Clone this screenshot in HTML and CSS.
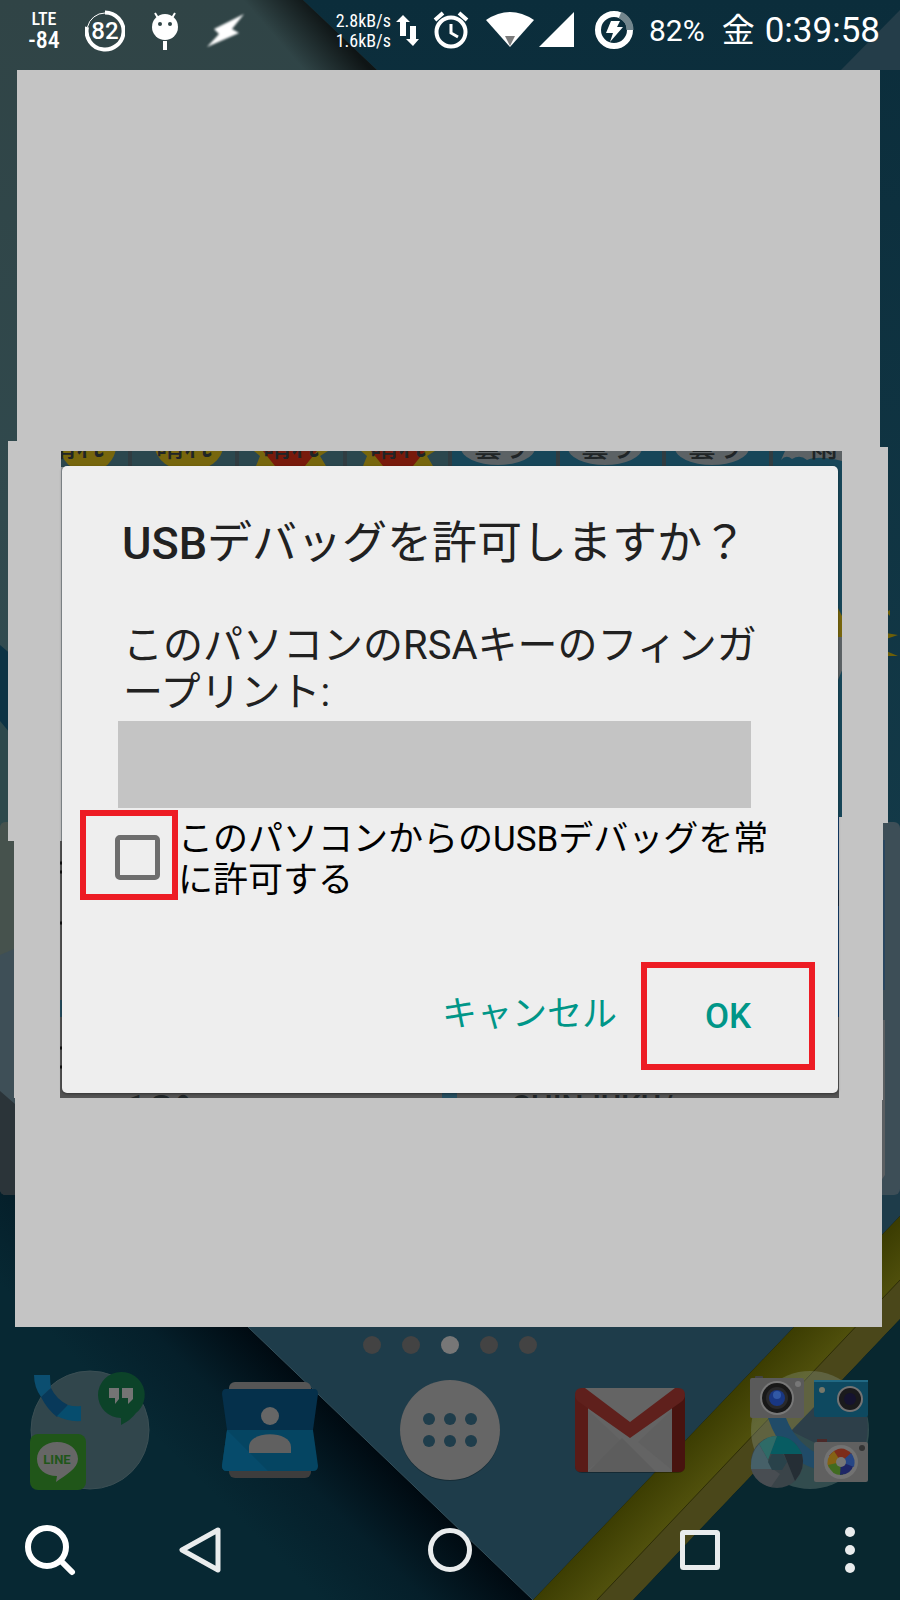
FILE: index.html
```html
<!DOCTYPE html>
<html lang="ja">

<head>
  <meta charset="utf-8">
  <meta name="viewport" content="width=device-width, initial-scale=1">
  <title>USBデバッグ</title>
  <link rel="stylesheet" href="styles.css">
</head>

<body>
  <div class="screen">
    <!-- 壁紙 -->
    <svg class="wallpaper" viewBox="0 0 900 1600" preserveAspectRatio="xMidYMid slice" aria-hidden="true">
      <defs>
        <linearGradient id="leftTop" x1="0" y1="0" x2="0" y2="1">
          <stop offset="0" stop-color="#304446" />
          <stop offset="1" stop-color="#304b50" />
        </linearGradient>
        <linearGradient id="edgeTop" gradientUnits="userSpaceOnUse" x1="302" y1="68" x2="340" y2="35">
          <stop offset="0" stop-color="#000" stop-opacity="0" />
          <stop offset="1" stop-color="#000" stop-opacity=".7" />
        </linearGradient>
        <linearGradient id="right" x1="0" y1="0" x2="0" y2="1">
          <stop offset="0" stop-color="#0b2d3b" />
          <stop offset="1" stop-color="#1a4453" />
        </linearGradient>
        <linearGradient id="edgeBottom" gradientUnits="userSpaceOnUse" x1="270" y1="1550" x2="372" y2="1446">
          <stop offset="0" stop-color="#072833" />
          <stop offset=".5" stop-color="#051f2a" />
          <stop offset="1" stop-color="#000a11" />
        </linearGradient>
        <linearGradient id="yellow" gradientUnits="userSpaceOnUse" x1="660" y1="1467" x2="692" y2="1498">
          <stop offset="0" stop-color="#3c3d02" />
          <stop offset="1" stop-color="#50500c" />
        </linearGradient>
        <clipPath id="hole">
          <path d="M61 451H842V817H839V1098H60V841H61Z" />
        </clipPath>
      </defs>
      <rect width="900" height="1600" fill="url(#right)" />
      <path d="M0 0H303L377 70V720H0Z" fill="url(#leftTop)" />
      <path d="M230 0H303L377 70H230Z" fill="url(#edgeTop)" />
      <path d="M900 10V70H841Z" fill="#243d49" />
      <path d="M0 645L20 662V745L0 721Z" fill="#0c3344" />
      <path d="M0 721L20 745V830H0Z" fill="#2d494c" />
      <path d="M0 1190H900V1600H0Z" fill="url(#edgeBottom)" />
      <path d="M105 1185L248 1327L533 1600L900 1216V1190Z" fill="#1e3c4a" />
      <path d="M248 1327L533 1600" stroke="#34505b" />
      <path d="M533 1600L900 1216V1319L633 1600Z" fill="url(#yellow)" />
      <path d="M597 1600L900 1280V1319L633 1600Z" fill="#4a471a" />
      <path d="M597 1600L900 1280" stroke="#2e2d08" />
      <path d="M633 1600L900 1319V1600Z" fill="#08272f" />
      <rect x="0" y="822" width="30" height="373" rx="6" fill="#3e4f57" />
      <path d="M0 828Q0 822 6 822H30V942L0 955Z" fill="#46524d" />
      <path d="M0 1091L30 1117V1195H6Q0 1195 0 1189Z" fill="#2b3439" />
      <rect x="870" y="822" width="30" height="373" rx="6" fill="#3d4e57" />
      <path d="M880 1020H885V1175L880 1182Z" fill="#5b5f62" />
      <path d="M884 840V990" stroke="#163e69" />
      <path d="M886 612L890 616V610ZM886 633L898 635L886 639ZM886 651L898 656L886 656Z" fill="#6d5f08" />
      <!-- 目隠し -->
      <path d="M17 70H880V447H888V823H883V1100H882V1327H15V1098H14V841H8V441H17Z" fill="#c4c4c4" />
      <g clip-path="url(#hole)">
        <rect x="60" y="451" width="782" height="647" fill="#545454" />
        <rect x="60" y="451" width="8" height="390" fill="#8e9599" />
        <rect x="60" y="451" width="390" height="16" fill="#2b474e" />
        <rect x="450" y="451" width="392" height="366" fill="#174659" />
        <rect x="836" y="817" width="4" height="200" fill="#123c6c" />
        <path d="M60 1000H64V1017H60ZM442 1090H457V1098H442Z" fill="#264e60" />
        <g fill="#77660d">
          <ellipse cx="88" cy="446" rx="28" ry="26" />
          <ellipse cx="189" cy="446" rx="34" ry="25" />
          <path d="M254 451L260 456L256 466H326L320 456L328 451ZM361 451L367 456L363 466H433L427 456L435 451Z" />
          <path d="M836 604L843 618V637H836Z" />
        </g>
        <path d="M263 451H317L305 466H275ZM371 451H425L413 466H383Z" fill="#781a0b" />
        <g fill="#5c6265">
          <ellipse cx="498" cy="448" rx="37" ry="17" />
          <ellipse cx="605" cy="448" rx="37" ry="17" />
          <ellipse cx="712" cy="448" rx="37" ry="17" />
          <path d="M781 460Q786 454 792 459Q800 454 807 460Q818 455 842 461V451H785Z" />
          <path d="M836 637H843V668L838 680Z" />
        </g>
        <path d="M130 451V466M237 451V466M345 451V466M450 451V466M558 451V466M664 451V466M771 451V466" stroke="#303c41"
          stroke-width="4" />
        <g class="weather">
          <text x="48" y="457">晴れ</text>
          <text x="156" y="457">晴れ</text>
          <text x="263" y="457">晴れ</text>
          <text x="370" y="457">晴れ</text>
          <text x="474" y="457">曇り</text>
          <text x="581" y="457">曇り</text>
          <text x="688" y="457">曇り</text>
          <text x="810" y="457">雨</text>
          <text class="city" x="512" y="1117">SHINJUKU/</text>
          <text class="degree" x="122" y="1128">18°</text>
        </g>
        <path d="M60 863H63M60 872H63M60 923H63M60 1048H63M60 1067H63M837 890V906" stroke="#111" stroke-width="3" />
      </g>
    </svg>

    <header class="status">
      <div class="group left">
        <div class="signal">
          <span class="lte">LTE</span>
          <span class="dbm">-84</span>
        </div>
        <div class="ring">
          <svg width="40" height="42" viewBox="0 0 40 42" fill="none" stroke="#fff">
            <path d="M20 2.500A18.500 18.500 0 1 1 2 17" stroke-width="4" />
            <path d="M2.500 17A18 18 0 0 1 20 3" stroke-width="1" />
          </svg>
          <span>82</span>
        </div>
        <svg width="32" height="42" viewBox="0 0 32 42" fill="#fff">
          <circle cx="16" cy="17" r="13" />
          <path d="M9 8L6 3M23 8L26 3" stroke="#fff" stroke-width="2" />
          <rect x="14" y="31" width="4" height="9" />
          <circle cx="11" cy="14" r="2" fill="#304446" />
          <circle cx="21" cy="14" r="2" fill="#304446" />
        </svg>
        <svg class="bolt" width="44" height="42" viewBox="0 0 44 42" fill="#fff">
          <path d="M39 4L9 19L14 24L2 37L34 23L27 19Z" />
        </svg>
      </div>

      <div class="group right">
        <div class="speed">
          <span>2.8kB/s</span>
          <span>1.6kB/s</span>
        </div>
        <svg class="near" width="26" height="42" viewBox="0 0 26 42" fill="#fff">
          <path d="M8 5L15 12H11V26H5V12H1ZM18 36L11 29H15V16H21V29H24Z" />
        </svg>
        <svg width="36" height="42" viewBox="0 0 36 42" fill="none" stroke="#fff">
          <circle cx="18" cy="22" r="14.500" stroke-width="4" />
          <path d="M18 14V23L25 27" stroke-width="3" />
          <path d="M2 10L10 3M34 10L26 3" stroke-width="4" />
        </svg>
        <svg width="96" height="42" viewBox="0 0 96 42" fill="#fff">
          <path d="M5 10Q29 -6 53 10L29 37Z" />
          <path d="M24 26H34L29 36Z" fill="#7c7c7c" />
          <path d="M58 37H93V2Z" />
        </svg>
        <svg width="48" height="42" viewBox="0 0 48 42">
          <circle cx="25" cy="20" r="16" fill="none" stroke="#fff" stroke-width="6" />
          <path d="M31 5A16 16 0 0 1 41 20" fill="none" stroke="#73868d" stroke-width="7" />
          <path d="M22 11H31L28 17H34L21 32L24 23H17Z" fill="#fff" />
        </svg>
        <span class="percent">82%</span>
        <span class="clock"><span>金</span><time>0:39:58</time></span>
      </div>
    </header>

    <main>
      <form class="dialog" role="dialog" aria-labelledby="title">
        <h1 id="title"><b>USB</b>デバッグを許可しますか？</h1>
        <p>このパソコンのRSAキーのフィンガ<br>ープリント:</p>
        <div class="fingerprint"></div>
        <div class="always">
          <div class="mark">
            <input type="checkbox" id="always">
          </div>
          <label for="always">このパソコンからのUSBデバッグを常<br>に許可する</label>
        </div>
        <div class="buttons">
          <button type="button" class="cancel">キャンセル</button>
          <button type="button" class="ok">OK</button>
        </div>
      </form>
    </main>

    <div class="pages">
      <i></i><i></i><i class="ac"></i><i></i><i></i>
    </div>

    <nav class="dock">
      <a href="#phone" aria-label="電話">
        <svg width="120" height="120" viewBox="0 0 120 120">
          <circle cx="60" cy="60" r="59" fill="#31464c" stroke="#3b4f54" />
          <path d="M4 5H20Q20 12 21 18L11 27Q4 17 4 5Z" fill="#0b4e70" />
          <path d="M21 18L11 27Q17 39 27 47L38 35Q26 29 21 18Z" fill="#08395a" />
          <path d="M38 35Q44 37 51 36V51Q38 52 27 46Z" fill="#064d6e" />
          <path d="M91 2A23 23 0 0 1 106 43Q101 50 91 55V48A23 23 0 1 1 91 2Z" fill="#0c4329" />
          <path d="M79 18H89V29L85 34V28H79ZM92 18H103V29L98 34V28H92Z" fill="#747474" />
          <rect x="0" y="64" width="56" height="56" rx="8" fill="#205619" />
          <path d="M27 72C39 72 48 79 48 89C48 98 36 105 26 112L27 106C15 106 7 99 7 89C7 79 16 72 27 72Z" fill="#666" />
          <text class="line" x="27" y="94">LINE</text>
        </svg>
      </a>
      <a href="#contacts" aria-label="連絡先">
        <svg width="120" height="120" viewBox="0 0 120 120">
          <rect x="19" y="12" width="82" height="30" rx="6" fill="#565656" />
          <rect x="19" y="80" width="82" height="28" rx="6" fill="#3d3d3d" />
          <path d="M16 19H104Q108 19 108 24L103 60H17L12 24Q12 19 16 19Z" fill="#05304b" />
          <path d="M17 60H103L108 96Q108 101 103 101H17Q12 101 12 96Z" fill="#054562" />
          <path d="M17 60L58 101H17Q12 101 12 96Z" fill="#064b6b" />
          <circle cx="60" cy="46" r="9" fill="#666" />
          <path d="M39 83V77C39 60 81 60 81 77V83Z" fill="#606060" />
        </svg>
      </a>
      <a href="#apps" aria-label="アプリ">
        <svg width="120" height="120" viewBox="0 0 120 120">
          <circle cx="60" cy="61" r="50" fill="#000" opacity=".25" />
          <circle cx="60" cy="60" r="50" fill="#666" />
          <g fill="#1f3d4b">
            <circle cx="39" cy="49" r="6" />
            <circle cx="60" cy="49" r="6" />
            <circle cx="81" cy="49" r="6" />
            <circle cx="39" cy="71" r="6" />
            <circle cx="60" cy="71" r="6" />
            <circle cx="81" cy="71" r="6" />
          </g>
        </svg>
      </a>
      <a href="#mail" aria-label="メール">
        <svg width="120" height="120" viewBox="0 0 120 120">
          <rect x="5" y="19" width="110" height="84" rx="7" fill="#000" opacity=".3" />
          <path d="M12 18H108V102H12Z" fill="#646464" />
          <path d="M18 40L52 72L18 100ZM102 40L68 72L102 100Z" fill="#606060" />
          <path d="M18 102L52 68L86 102Z" fill="#5d5d5d" />
          <path d="M5 26L18 37V102H11Q5 102 5 96Z" fill="#5a1b17" />
          <path d="M115 26L102 37V102H109Q115 102 115 96Z" fill="#48130f" />
          <path d="M5 25Q5 18 12 18H15L60 52L105 18H108Q115 18 115 25Q115 29 111 32L60 68L9 32Q5 29 5 25Z" fill="#5f201c" />
        </svg>
      </a>
      <a href="#camera" aria-label="カメラ">
        <svg width="120" height="120" viewBox="0 0 120 120">
          <circle cx="60" cy="60" r="59" fill="#8b9c92" opacity=".32" />
          <path d="M64 37L115 37Q123 66 108 94L41 61Z" fill="#2d3f49" />
          <path d="M18 48H36Q45 71 66 83V99Q32 89 18 48Z" fill="#204b68" />
          <rect x="5" y="6" width="8" height="4" rx="1" fill="#434343" />
          <rect x="0" y="8" width="54" height="40" rx="2" fill="#5a5a5a" />
          <circle cx="27" cy="28" r="17" fill="#787878" />
          <circle cx="27" cy="28" r="15" fill="#181818" />
          <circle cx="27" cy="28" r="11" fill="#29292b" />
          <circle cx="27" cy="28" r="8" fill="#193783" />
          <circle cx="27" cy="25" r="4" fill="#3158a5" />
          <circle cx="48" cy="14" r="3" fill="#777" />
          <rect x="64" y="10" width="54" height="37" rx="2" fill="#0e4960" />
          <path d="M64 11H118" stroke="#216984" stroke-width="2" />
          <circle cx="72" cy="20" r="3" fill="#76786a" />
          <circle cx="100" cy="29" r="13" fill="#747474" />
          <circle cx="100" cy="29" r="11" fill="#1a1a1c" />
          <circle cx="100" cy="29" r="6" fill="#15132f" />
          <circle cx="27" cy="92" r="26" fill="#3a4449" />
          <path d="M27 66Q44 66 52 84H20Z" fill="#075c62" />
          <path d="M27 66L18 90L9 74Q17 66 27 66Z" fill="#2e6b67" />
          <path d="M9 74L23 99H1Q0 84 9 74Z" fill="#466068" />
          <path d="M1 99H23L30 104L21 117Q5 113 1 99Z" fill="#484d52" />
          <path d="M34 84H52Q56 98 45 111Z" fill="#252e35" />
          <path d="M22 84H33L37 92L32 100H22L18 92Z" fill="#29424a" />
          <rect x="67" y="69" width="10" height="4" fill="#4b2929" />
          <rect x="64" y="72" width="54" height="40" rx="2" fill="#606060" />
          <circle cx="112" cy="78" r="3" fill="#343434" />
          <circle cx="91" cy="92" r="17" fill="#727272" />
          <path d="M91 92L79 86Q90 72 102 84Z" fill="#7c2c1b" />
          <path d="M91 92L84 81Q74 89 79 98Z" fill="#856214" />
          <path d="M91 92L78 95Q82 106 93 105Z" fill="#416b20" />
          <path d="M91 92L90 105Q101 105 104 94Z" fill="#1e2666" />
          <path d="M91 92L104 97Q106 89 101 83Z" fill="#264685" />
          <circle cx="91" cy="92" r="5" fill="#777" />
        </svg>
      </a>
    </nav>

    <nav class="keys">
      <button type="button" aria-label="検索">
        <svg width="60" height="60" viewBox="0 0 60 60" fill="none" stroke="#fff">
          <circle cx="27" cy="27" r="19" stroke-width="6" />
          <path d="M41 41L52 52" stroke-width="6" stroke-linecap="round" />
        </svg>
      </button>
      <button type="button" aria-label="戻る">
        <svg width="60" height="60" viewBox="0 0 60 60" fill="none" stroke="#e9eced">
          <path d="M48 10L12 30L48 50Z" stroke-width="5" stroke-linejoin="round" />
        </svg>
      </button>
      <button type="button" aria-label="ホーム">
        <svg width="60" height="60" viewBox="0 0 60 60" fill="none" stroke="#e9eced">
          <circle cx="30" cy="30" r="19.500" stroke-width="5" />
        </svg>
      </button>
      <button type="button" aria-label="履歴">
        <svg width="60" height="60" viewBox="0 0 60 60" fill="none" stroke="#e9eced">
          <rect x="12.500" y="12.500" width="35" height="35" rx="1" stroke-width="5" />
        </svg>
      </button>
      <button type="button" aria-label="メニュー">
        <svg width="60" height="60" viewBox="0 0 60 60" fill="#e9eced">
          <circle cx="30" cy="12" r="5" />
          <circle cx="30" cy="30" r="5" />
          <circle cx="30" cy="48" r="5" />
        </svg>
      </button>
    </nav>
  </div>
</body>

</html>
```

FILE: styles.css
```css
* {
  margin: 0;
  padding: 0;
  box-sizing: border-box;
}

body {
  font-family: Roboto, "Noto Sans CJK JP", sans-serif;
  background: #072731;
}

svg {
  display: block;
}

button {
  border: none;
  background: none;
  font-family: inherit;
  cursor: pointer;
}

.screen {
  position: relative;
  display: flex;
  flex-direction: column;
  min-height: 100vh;
  overflow: hidden;
}

.screen > * {
  z-index: 1;
}

.wallpaper {
  position: absolute;
  top: 0;
  left: 0;
  width: 100%;
  height: 100%;
  z-index: 0;
}

.weather {
  font-size: 28px;
  font-weight: 500;
  fill: #202527;
}

.weather .city {
  font-size: 31px;
}

.weather .degree {
  font-size: 46px;
}

/* ステータスバー */
.status {
  display: flex;
  justify-content: space-between;
  height: 70px;
  padding: 10px 20px 18px 27px;
  color: #fff;
}

.group {
  display: flex;
  align-items: center;
}

.left {
  gap: 24px;
}

.right {
  gap: 12px;
}

.signal,
.speed {
  display: flex;
  flex-direction: column;
  align-items: center;
  font-family: "Roboto Condensed", "Liberation Sans Narrow", Roboto, sans-serif;
}

.signal {
  width: 34px;
  font-weight: 500;
}

.lte {
  font-size: 18px;
  line-height: 18px;
}

.dbm {
  font-size: 24px;
  line-height: 24px;
}

.speed {
  font-size: 18px;
  line-height: 20px;
}

.near {
  margin-left: -8px;
}

.ring {
  display: grid;
  place-items: center;
}

.ring svg,
.ring span {
  grid-area: 1 / 1;
}

.ring span {
  font-size: 24px;
  line-height: 24px;
  font-weight: 500;
}

.bolt {
  filter: blur(1px);
}

.percent {
  font-size: 30px;
  line-height: 42px;
}

.clock {
  display: flex;
  gap: 10px;
  margin-left: 5px;
  line-height: 42px;
}

.clock span {
  font-size: 33px;
}

.clock time {
  font-size: 35px;
}

/* ダイアログ */
main {
  flex: 1;
  padding: 396px 62px 0;
}

.dialog {
  padding: 48px 23px 23px 18px;
  border-radius: 5px;
  background: #eee;
  box-shadow: 0 1px 3px rgba(0, 0, 0, 0.4);
  color: #212121;
}

.dialog h1 {
  margin-left: 42px;
  font-size: 45px;
  line-height: 60px;
  font-weight: 400;
}

.dialog h1 b {
  font-weight: 500;
}

.dialog p {
  margin: 48px 0 5px 43px;
  font-size: 40px;
  line-height: 47px;
}

.fingerprint {
  height: 87px;
  margin: 0 64px 0 38px;
  background: #c4c4c4;
}

.always {
  display: flex;
  margin-top: 2px;
}

.mark {
  flex: none;
  width: 98px;
  height: 90px;
  padding: 19px 0 0 29px;
  border: 6px solid #ed1c24;
}

.mark input {
  appearance: none;
  display: block;
  width: 45px;
  height: 45px;
  border: 5px solid #6d6d6d;
  border-radius: 5px;
}

.always label {
  padding-top: 9px;
  color: #000;
  font-size: 35px;
  line-height: 41px;
  white-space: nowrap;
}

.buttons {
  display: flex;
  justify-content: flex-end;
  margin-top: 61px;
}

.buttons button {
  height: 108px;
  color: #009688;
  font-size: 35px;
  line-height: 41px;
  font-weight: 500;
}

.buttons .cancel {
  padding: 0 24px 4px;
  font-weight: 400;
}

.buttons .ok {
  width: 174px;
  border: 6px solid #ed1c24;
}

/* ページ位置 */
.pages {
  display: flex;
  justify-content: center;
  gap: 21px;
  margin-bottom: 16px;
}

.pages i {
  width: 18px;
  height: 18px;
  border-radius: 50%;
  background: #434343;
}

.pages i.ac {
  background: #777;
}

.dock {
  display: grid;
  grid-template-columns: repeat(5, 1fr);
  justify-items: center;
}

.dock .line {
  font-size: 13px;
  font-weight: 700;
  text-anchor: middle;
  fill: #205619;
}

.keys {
  display: grid;
  grid-template-columns: 2fr 4fr 6fr 4fr 2fr;
  justify-items: center;
  padding: 30px 0 20px;
}
```
